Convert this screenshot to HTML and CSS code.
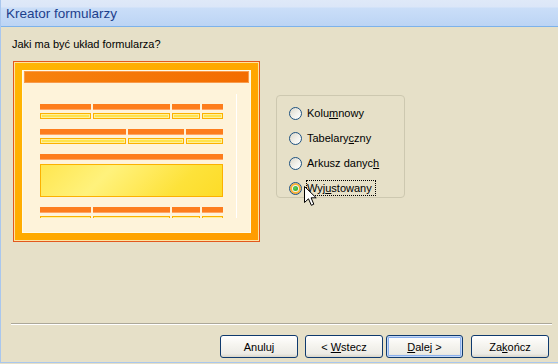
FILE: index.html
```html
<!DOCTYPE html>
<html lang="pl">
<head>
    <meta charset="UTF-8">
    <title>Kreator formularzy</title>
    <link rel="stylesheet" href="styles.css">
</head>
<body>

<div class="window">
    <div class="titlebar">Kreator formularzy</div>

    <div class="dialog">
        <p class="question">Jaki ma być układ formularza?</p>

        <div class="content">
            <div class="preview">
                <div class="sheet">
                    <div class="sheet-header"></div>
                    <div class="rows">
                        <div class="group cols4">
                            <span class="lbl"></span><span class="lbl"></span><span class="lbl"></span><span class="lbl"></span>
                            <span class="fld"></span><span class="fld"></span><span class="fld"></span><span class="fld"></span>
                        </div>
                        <div class="group cols3">
                            <span class="lbl"></span><span class="lbl"></span><span class="lbl"></span>
                            <span class="fld"></span><span class="fld"></span><span class="fld"></span>
                        </div>
                        <div class="group memo">
                            <span class="lbl"></span>
                            <span class="fld big"></span>
                        </div>
                        <div class="group cols4">
                            <span class="lbl"></span><span class="lbl"></span><span class="lbl"></span><span class="lbl"></span>
                            <span class="fld"></span><span class="fld"></span><span class="fld"></span><span class="fld"></span>
                        </div>
                    </div>
                </div>
            </div>

            <div class="options">
                <label class="option"><span class="radio"></span><span class="text">Kolu<u>m</u>nowy</span></label>
                <label class="option"><span class="radio"></span><span class="text">Tabelary<u>c</u>zny</span></label>
                <label class="option"><span class="radio"></span><span class="text">Arkusz danyc<u>h</u></span></label>
                <label class="option checked"><span class="radio"></span><span class="text focus">Wyj<u>u</u>stowany</span></label>
            </div>
        </div>

        <div class="separator"></div>

        <div class="buttons">
            <button class="btn cancel">Anuluj</button>
            <button class="btn back">&lt; <u>W</u>stecz</button>
            <button class="btn next default"><u>D</u>alej &gt;</button>
            <button class="btn finish">Za<u>k</u>ończ</button>
        </div>
    </div>

    <svg class="cursor" width="14" height="21" viewBox="0 0 14 21">
        <path d="M0.5 0.5 L0.5 16.5 L4.5 12.8 L7.3 19.3 L9.8 18.2 L7.1 11.8 L12.2 11.8 Z" fill="#fff" stroke="#000" stroke-width="1" stroke-linejoin="miter"/>
    </svg>
</div>

</body>
</html>
```

FILE: styles.css
```css
body {
    margin: 0;
    background-color: #e6e0c8;
    font-family: "Liberation Sans", Arial, sans-serif;
    font-size: 11px;
    color: #000;
}
.window {
    position: relative;
    width: 558px;
    height: 363px;
    box-sizing: border-box;
    border-left: 1px solid #a9c7ee;
    border-bottom: 1px solid #a9c7ee;
    overflow: hidden;
}
.titlebar {
    height: 26px;
    padding-left: 5px;
    line-height: 27px;
    font-size: 13.5px;
    color: #1d3f8c;
    background: linear-gradient(to bottom, #dfe9f8 0, #dbe6f8 7px, #cadef8 8px, #bcd4f4 26px);
    border-bottom: 1px solid #7db2ea;
}
.dialog {
    padding: 10px 12px 0 11px;
}
.question {
    margin: 0;
    line-height: 14px;
}

/* layout preview */
.content {
    display: flex;
    align-items: flex-start;
    margin-top: 10px;
    height: 181px;
}
.preview {
    width: 247px;
    height: 181px;
    margin-left: 1px;
    box-sizing: border-box;
    padding: 8px;
    border: 1px solid #e2581d;
    background: linear-gradient(135deg, #ffb703 0%, #ffaa00 45%, #ff9c00 100%);
    box-shadow: inset 0 0 0 1px #ffe3a0;
}
.sheet {
    height: 100%;
    box-sizing: border-box;
    border: 1px solid #fffbe9;
    background-color: #fef3da;
}
.sheet-header {
    height: 12px;
    margin: 0 1px;
    background: linear-gradient(to right, #f7820e, #f36c00);
    box-shadow: inset 0 0 0 1px #f99a4a;
}
.rows {
    width: 197px;
    height: 124px;
    box-sizing: border-box;
    margin: 11px 0 0 17px;
    padding: 10px 13px 0 0;
    border-right: 1px solid #ffffff;
    overflow: hidden;
}
.group {
    display: grid;
    column-gap: 2px;
    row-gap: 3px;
    margin-bottom: 10px;
}
.cols4 {
    grid-template-columns: 51px 77px 28px 21px;
}
.cols3 {
    grid-template-columns: 86px 56px 37px;
}
.memo {
    grid-template-columns: 183px;
    row-gap: 4px;
}
.lbl {
    display: block;
    height: 6px;
    background-color: #fd7d1d;
    box-shadow: inset 0 -1px 0 #fea565;
}
.fld {
    display: block;
    height: 6px;
    box-sizing: border-box;
    border: 1px solid #fcb100;
    background-color: #ffe34c;
    box-shadow: inset 0 0 0 1px #fff09a;
}
.fld.big {
    height: 33px;
    box-shadow: none;
    background: linear-gradient(135deg, #ffe650 0%, #fff27c 35%, #ffea5c 55%, #fde23a 75%, #fddc28 100%);
}

/* option group */
.options {
    width: 129px;
    height: 103px;
    box-sizing: border-box;
    margin: 34px 0 0 16px;
    padding: 8px 0 0 12px;
    border: 1px solid #cdc8b0;
    border-radius: 4px;
    display: flex;
    flex-direction: column;
    gap: 7px;
}
.option {
    display: flex;
    align-items: center;
    height: 18px;
}
.radio {
    width: 13px;
    height: 13px;
    box-sizing: border-box;
    border-radius: 50%;
    border: 1px solid #1d5180;
    background: linear-gradient(135deg, #dcd8cb 0%, #f4f3ee 60%, #ffffff 100%);
    position: relative;
}
.option.checked .radio {
    box-shadow: inset 0 0 0 2px #f8b036;
    background: #f5f4ee;
}
.option.checked .radio::after {
    content: "";
    position: absolute;
    left: 3px;
    top: 3px;
    width: 5px;
    height: 5px;
    border-radius: 50%;
    background: radial-gradient(circle at 40% 40%, #5fd35f, #1c9a1c);
}
.text {
    margin-left: 4px;
    padding: 1px 3px 1px 0;
    border: 1px dotted transparent;
}
.text.focus {
    border-color: #000;
}

/* bottom */
.separator {
    width: 541px;
    margin: 81px 0 0 -1px;
    border-top: 1px solid #aca899;
    border-bottom: 1px solid #ffffff;
}
.buttons {
    display: flex;
    justify-content: flex-end;
    margin-top: 10px;
    margin-right: -3px;
}
.btn {
    width: 78px;
    height: 23px;
    padding: 0;
    font-family: "Liberation Sans", Arial, sans-serif;
    font-size: 11px;
    color: #000;
    border: 1px solid #0f3a6e;
    border-radius: 3px;
    background: linear-gradient(to bottom, #ffffff 0%, #f6f5f0 40%, #ecebe5 85%, #d8d5c8 100%);
}
.back {
    margin-left: 7px;
}
.next {
    width: 77px;
    margin-left: 3px;
}
.finish {
    margin-left: 8px;
}
.btn.default {
    box-shadow: inset 0 0 0 1px #c4d8f6, inset 0 0 0 2px #8bb0ec;
}
.cursor {
    position: absolute;
    left: 303px;
    top: 186px;
}
```
